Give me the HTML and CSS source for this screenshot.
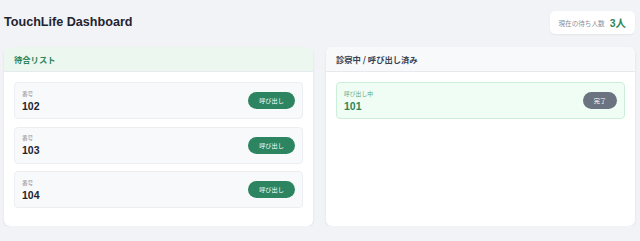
FILE: index.html
```html
<!DOCTYPE html>
<html lang="ja">
<head>
<meta charset="utf-8">
<title>TouchLife Dashboard</title>
<link rel="stylesheet" href="styles.css">
</head>
<body>
<div class="page">
  <header class="topbar">
    <h1 class="title">TouchLife Dashboard</h1>
    <div class="count-badge">
      <span class="count-label">現在の待ち人数</span>
      <span class="count-value">3人</span>
    </div>
  </header>
  <main class="panels">
    <section class="panel">
      <div class="panel-header panel-header--waiting">待合リスト</div>
      <div class="panel-body">
        <div class="ticket">
          <div class="ticket-info">
            <div class="ticket-label">番号</div>
            <div class="ticket-number">102</div>
          </div>
          <button class="btn btn-call">呼び出し</button>
        </div>
        <div class="ticket">
          <div class="ticket-info">
            <div class="ticket-label">番号</div>
            <div class="ticket-number">103</div>
          </div>
          <button class="btn btn-call">呼び出し</button>
        </div>
        <div class="ticket">
          <div class="ticket-info">
            <div class="ticket-label">番号</div>
            <div class="ticket-number">104</div>
          </div>
          <button class="btn btn-call">呼び出し</button>
        </div>
      </div>
    </section>
    <section class="panel">
      <div class="panel-header panel-header--called">診察中 / 呼び出し済み</div>
      <div class="panel-body">
        <div class="ticket ticket--active">
          <div class="ticket-info">
            <div class="ticket-label">呼び出し中</div>
            <div class="ticket-number">101</div>
          </div>
          <button class="btn btn-done">完了</button>
        </div>
      </div>
    </section>
  </main>
</div>
</body>
</html>
```
FILE: styles.css
```css
* { box-sizing: border-box; }
html, body { margin: 0; padding: 0; }
body {
  background: #f2f3f7;
  font-family: "Liberation Sans", Arial, "Noto Sans CJK JP", sans-serif;
  color: #1f2937;
}
.page {
  padding: 11px 5px 0 4px;
}
.topbar {
  display: flex;
  justify-content: space-between;
  align-items: center;
  margin-bottom: 13px;
}
.title {
  margin: 0;
  font-size: 12.6px;
  font-weight: 700;
  color: #1f2430;
  line-height: 23px;
}
.count-badge {
  display: flex;
  align-items: center;
  gap: 5px;
  height: 23px;
  padding: 0 9px;
  background: #ffffff;
  border-radius: 5px;
  box-shadow: 0 1px 2px rgba(0, 0, 0, 0.06);
}
.count-label {
  font-family: "Noto Sans CJK JP", sans-serif;
  font-size: 6.6px;
  color: #8a8f99;
}
.count-value {
  font-size: 10.5px;
  font-weight: 700;
  color: #2f855a;
  font-family: "Liberation Sans", "Noto Sans CJK JP", sans-serif;
}
.panels {
  display: grid;
  grid-template-columns: 1fr 1fr;
  gap: 13px;
}
.panel {
  background: #ffffff;
  border-radius: 6px;
  box-shadow: 0 1px 3px rgba(0, 0, 0, 0.08);
  overflow: hidden;
}
.panel-header {
  height: 25px;
  padding: 0 10px;
  display: flex;
  align-items: center;
  font-family: "Noto Sans CJK JP", sans-serif;
  font-size: 8.3px;
  font-weight: 700;
  border-bottom: 1px solid #e6e9ee;
}
.panel-header--waiting {
  background: #ecf7f0;
  color: #2f855a;
}
.panel-header--called {
  background: #f8f9fb;
  color: #374151;
}
.panel-body {
  padding: 10px 10px 10px;
}
.ticket {
  display: flex;
  justify-content: space-between;
  align-items: center;
  height: 37px;
  padding: 0 7px;
  margin-bottom: 7.5px;
  background: #f8f9fb;
  border: 1px solid #eceef2;
  border-radius: 4px;
}
.ticket--active {
  background: #f0fdf4;
  border-color: #cdeed8;
}
.ticket-info {
  display: flex;
  flex-direction: column;
}
.ticket-label {
  font-family: "Noto Sans CJK JP", sans-serif;
  font-size: 5.6px;
  line-height: 8px;
  color: #8f959e;
  margin-bottom: 2px;
}
.ticket--active .ticket-label {
  color: #5aa67b;
  font-size: 5.8px;
}
.ticket-number {
  font-size: 10.5px;
  line-height: 12px;
  font-weight: 700;
  color: #1f2430;
}
.ticket--active .ticket-number {
  color: #2f855a;
}
.btn {
  border: none;
  border-radius: 9px;
  height: 17px;
  padding: 0;
  font-family: "Noto Sans CJK JP", sans-serif;
  font-size: 6.2px;
  color: #ffffff;
  cursor: pointer;
}
.btn-call {
  width: 47px;
  background: #2c8560;
}
.btn-done {
  width: 34px;
  background: #6b7280;
}
```
